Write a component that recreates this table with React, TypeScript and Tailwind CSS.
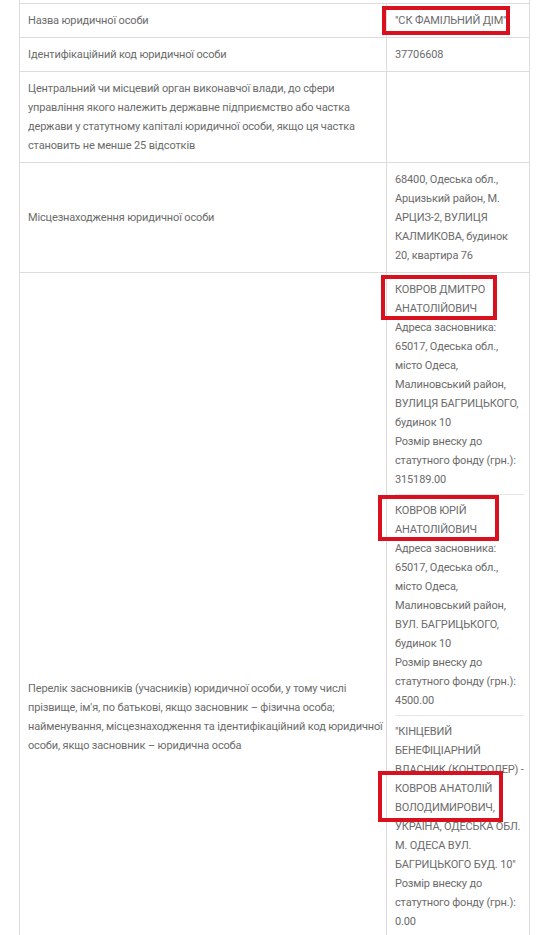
function Cell({ children, className = "" }: { children: React.ReactNode; className?: string }) {
  return <div className={`px-2 py-[7px] ${className}`}>{children}</div>;
}

function Lines({ lines }: { lines: string[] }) {
  return (
    <>
      {lines.map((l, i) => (
        <div key={i} className="whitespace-nowrap">
          {l}
        </div>
      ))}
    </>
  );
}

function Founder({ lines, last = false }: { lines: string[]; last?: boolean }) {
  return (
    <div className={`pt-[6px] pb-[5px] first:pt-0 ${last ? "" : "border-b border-[#e6e6e6]"}`}>
      <Lines lines={lines} />
    </div>
  );
}

export default function App() {
  return (
    <div
      className="relative w-[538px] h-[935px] overflow-hidden bg-white text-[11px] leading-[19px] text-[#6b6b6b] tracking-[-0.15px]"
      style={{ fontFamily: 'Roboto, "Liberation Sans", sans-serif' }}
    >
      <div className="ml-[19px] w-[511px] border-x border-[#dcdcdc] pt-[3px]">
        {/* Назва */}
        <div className="grid grid-cols-[367px_1fr] border-t border-[#dcdcdc]">
          <Cell className="border-r border-[#dcdcdc]">Назва юридичної особи</Cell>
          <Cell className="whitespace-nowrap">"СК ФАМІЛЬНИЙ ДІМ"</Cell>
        </div>
        {/* Код */}
        <div className="grid grid-cols-[367px_1fr] border-t border-[#dcdcdc]">
          <Cell className="border-r border-[#dcdcdc]">Ідентифікаційний код юридичної особи</Cell>
          <Cell>37706608</Cell>
        </div>
        {/* Орган влади */}
        <div className="grid grid-cols-[367px_1fr] border-t border-[#dcdcdc]">
          <Cell className="border-r border-[#dcdcdc]">
            <Lines
              lines={[
                "Центральний чи місцевий орган виконавчої влади, до сфери",
                "управління якого належить державне підприємство або частка",
                "держави у статутному капіталі юридичної особи, якщо ця частка",
                "становить не менше 25 відсотків",
              ]}
            />
          </Cell>
          <Cell>{""}</Cell>
        </div>
        {/* Адреса */}
        <div className="grid grid-cols-[367px_1fr] border-t border-[#dcdcdc]">
          <Cell className="border-r border-[#dcdcdc] flex items-center">Місцезнаходження юридичної особи</Cell>
          <Cell>
            <Lines
              lines={[
                "68400, Одеська обл.,",
                "Арцизький район, М.",
                "АРЦИЗ-2, ВУЛИЦЯ",
                "КАЛМИКОВА, будинок",
                "20, квартира 76",
              ]}
            />
          </Cell>
        </div>
        {/* Засновники */}
        <div className="grid grid-cols-[367px_1fr] border-t border-[#dcdcdc] min-h-[889px]">
          <Cell className="border-r border-[#dcdcdc] flex items-center">
            <div>
              <Lines
                lines={[
                  "Перелік засновників (учасників) юридичної особи, у тому числі",
                  "прізвище, ім'я, по батькові, якщо засновник – фізична особа;",
                  "найменування, місцезнаходження та ідентифікаційний код юридичної",
                  "особи, якщо засновник – юридична особа",
                ]}
              />
            </div>
          </Cell>
          <Cell className="pr-[10px]">
            <Founder
              lines={[
                "КОВРОВ ДМИТРО",
                "АНАТОЛІЙОВИЧ",
                "Адреса засновника:",
                "65017, Одеська обл.,",
                "місто Одеса,",
                "Малиновський район,",
                "ВУЛИЦЯ БАГРИЦЬКОГО,",
                "будинок 10",
                "Розмір внеску до",
                "статутного фонду (грн.):",
                "315189.00",
              ]}
            />
            <Founder
              lines={[
                "КОВРОВ ЮРІЙ",
                "АНАТОЛІЙОВИЧ",
                "Адреса засновника:",
                "65017, Одеська обл.,",
                "місто Одеса,",
                "Малиновський район,",
                "ВУЛ. БАГРИЦЬКОГО,",
                "будинок 10",
                "Розмір внеску до",
                "статутного фонду (грн.):",
                "4500.00",
              ]}
            />
            <Founder
              last
              lines={[
                "\"КІНЦЕВИЙ",
                "БЕНЕФІЦІАРНИЙ",
                "ВЛАСНИК (КОНТРОЛЕР) -",
                "КОВРОВ АНАТОЛІЙ",
                "ВОЛОДИМИРОВИЧ,",
                "УКРАЇНА, ОДЕСЬКА ОБЛ.",
                "М. ОДЕСА ВУЛ.",
                "БАГРИЦЬКОГО БУД. 10\"",
                "Розмір внеску до",
                "статутного фонду (грн.):",
                "0.00",
              ]}
            />
          </Cell>
        </div>
      </div>

      {/* red highlight frames */}
      <div className="absolute left-[382px] top-[6px] w-[128px] h-[29px] border-4 border-[#d9111e]" />
      <div className="absolute left-[381px] top-[275px] w-[116px] h-[45px] border-4 border-[#d9111e]" />
      <div className="absolute left-[378px] top-[495px] w-[121px] h-[46px] border-4 border-[#d9111e]" />
      <div className="absolute left-[378px] top-[771px] w-[125px] h-[51px] border-4 border-[#d9111e]" />
    </div>
  );
}
